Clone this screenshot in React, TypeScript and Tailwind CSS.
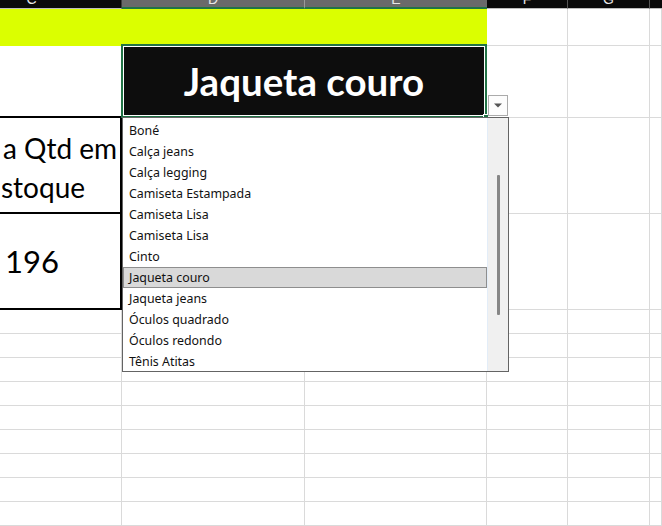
import React from 'react';

const grid = 'border-r border-b border-[#dadada]';

const items = [
  'Boné',
  'Calça jeans',
  'Calça legging',
  'Camiseta Estampada',
  'Camiseta Lisa',
  'Camiseta Lisa',
  'Cinto',
  'Jaqueta couro',
  'Jaqueta jeans',
  'Óculos quadrado',
  'Óculos redondo',
  'Tênis Atitas',
];

const HeaderCell: React.FC<{ label: string; selected?: boolean; className?: string }> = ({
  label,
  selected,
  className = '',
}) => (
  <div
    className={`overflow-hidden text-center ${
      selected ? 'bg-[#6a6a6a] border-b-2 border-[#217346]' : 'bg-[#0a0a0a] border-b border-[#bdbdbd]'
    } ${className}`}
  >
    <span className="block -mt-[8px] text-[14px] leading-[14px] text-[#e8e8e8] font-['Liberation_Sans',sans-serif]">
      {label}
    </span>
  </div>
);

export default function App() {
  return (
    <div className="relative w-[662px] h-[526px] overflow-hidden bg-white font-['Lato',sans-serif]">
      <div className="grid grid-cols-[122px_183px_182px_81px_82px_12px] grid-rows-[9px_37px_72px_96px_96px_repeat(10,24px)]">
        {/* column headers */}
        <HeaderCell label="C" className="pr-[58px] border-r border-r-[#3a3a3a]" />
        <HeaderCell label="D" selected className="border-r border-r-[#9a9a9a]" />
        <HeaderCell label="E" selected />
        <HeaderCell label="F" className="border-r border-r-[#555]" />
        <HeaderCell label="G" className="border-r border-r-[#555]" />
        <HeaderCell label="" />

        {/* row 1 */}
        <div className="col-span-3 bg-[#dbff00]" />
        <div className={grid} />
        <div className={grid} />
        <div className={grid} />

        {/* row 2 */}
        <div className="border-b-2 border-black" />
        <div className="col-span-2 border-2 border-[#217346] -mt-[2px] -ml-[1px]">
          <div className="h-full border border-white bg-[#0d0d0d] flex items-center justify-center">
            <span className="text-white font-bold text-[38.5px] leading-none">Jaqueta couro</span>
          </div>
        </div>
        <div className={grid} />
        <div className={grid} />
        <div className={grid} />

        {/* row 3 */}
        <div className="overflow-hidden whitespace-nowrap border-r-2 border-b-2 border-black pl-[2px] pt-[11px] text-[28px] leading-[39px] text-black">
          <div className="pl-[1px]">a Qtd em</div>
          <div className="-ml-[1px]">stoque</div>
        </div>
        <div className={grid} />
        <div className={grid} />
        <div className={grid} />
        <div className={grid} />
        <div className={grid} />

        {/* row 4 */}
        <div className="border-r-2 border-b-2 border-black flex items-center pl-[5px] pt-[1px] text-[31px] leading-none text-black">
          196
        </div>
        <div className={grid} />
        <div className={grid} />
        <div className={grid} />
        <div className={grid} />
        <div className={grid} />

        {/* empty rows */}
        {Array.from({ length: 10 }).map((_, r) =>
          Array.from({ length: 6 }).map((_, c) => <div key={`${r}-${c}`} className={grid} />)
        )}
      </div>

      {/* fill handle */}
      <div className="absolute left-[483px] top-[114px] w-[6px] h-[6px] bg-[#217346] border border-white" />

      {/* dropdown arrow button */}
      <div className="absolute left-[488px] top-[95px] w-[20px] h-[21px] border border-[#ababab] bg-[#fdfdfd] flex items-center justify-center">
        <svg width="8" height="5" viewBox="0 0 8 5">
          <path d="M0 0.5 H8 L4 4.5 Z" fill="#555" />
        </svg>
      </div>

      {/* validation list */}
      <div className="absolute left-[122px] top-[117px] w-[387px] h-[255px] border border-[#646464] bg-white flex font-['Noto_Sans',sans-serif] text-[12.4px] text-[#111]">
        <div className="flex-1 pt-[2px]">
          {items.map((item, i) => (
            <div
              key={i}
              className={`h-[21px] flex items-center pl-[5px] pt-[1px] border ${
                i === 7 ? 'bg-[#d9d9d9] border-[#8e8e8e]' : 'border-transparent'
              }`}
            >
              {item}
            </div>
          ))}
        </div>
        <div className="w-[21px] bg-[#f0f0f0] border-l border-[#e3edf8] pt-[57px] flex justify-center">
          <div className="w-[3px] h-[140px] bg-[#868686] rounded-[1px]" />
        </div>
      </div>
    </div>
  );
}
